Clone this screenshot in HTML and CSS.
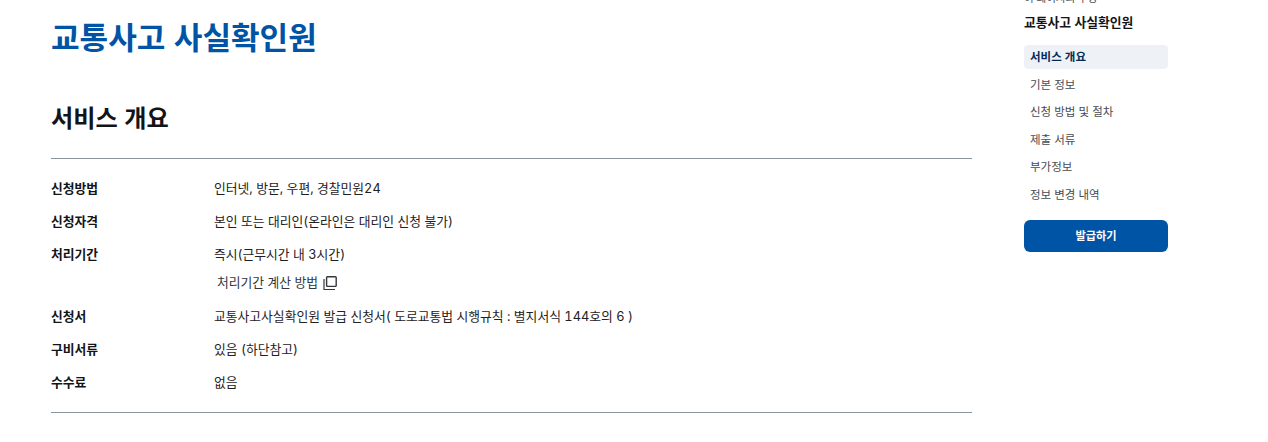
FILE: index.html
```html
<!DOCTYPE html>
<html lang="ko">
<head>
<meta charset="utf-8">
<title>교통사고 사실확인원</title>
<link rel="stylesheet" href="styles.css">
</head>
<body>
<div class="page">
  <main class="main">
    <h1 class="title">교통사고 사실확인원</h1>
    <h2 class="section-title">서비스 개요</h2>
    <dl class="info">
      <div class="row"><dt>신청방법</dt><dd>인터넷, 방문, 우편, 경찰민원24</dd></div>
      <div class="row"><dt>신청자격</dt><dd>본인 또는 대리인(온라인은 대리인 신청 불가)</dd></div>
      <div class="row"><dt>처리기간</dt><dd>즉시(근무시간 내 3시간)
        <a class="calc" href="#">처리기간 계산 방법
          <svg class="copy" width="14" height="14" viewBox="0 0 14 14" aria-hidden="true"><path d="M1 3v10.5h11" fill="none" stroke="#33363d" stroke-width="1.2"/><rect x="3.6" y="0.8" width="9.6" height="9.6" rx="0.8" fill="none" stroke="#33363d" stroke-width="1.4"/></svg>
        </a></dd></div>
      <div class="row"><dt>신청서</dt><dd>교통사고사실확인원 발급 신청서( 도로교통법 시행규칙 : 별지서식 144호의 6 )</dd></div>
      <div class="row"><dt>구비서류</dt><dd>있음 (하단참고)</dd></div>
      <div class="row"><dt>수수료</dt><dd>없음</dd></div>
    </dl>
  </main>
  <aside class="side">
    <p class="side-label">이 페이지의 구성</p>
    <p class="side-title">교통사고 사실확인원</p>
    <nav class="toc">
      <a class="toc-item active" href="#">서비스 개요</a>
      <a class="toc-item" href="#">기본 정보</a>
      <a class="toc-item" href="#">신청 방법 및 절차</a>
      <a class="toc-item" href="#">제출 서류</a>
      <a class="toc-item" href="#">부가정보</a>
      <a class="toc-item" href="#">정보 변경 내역</a>
    </nav>
    <a class="issue" href="#">발급하기</a>
  </aside>
</div>
</body>
</html>
```
FILE: styles.css
```css
* { box-sizing: border-box; }
html, body { margin: 0; padding: 0; background: #fff; overflow: hidden; }
body { font-family: Inter, "Noto Sans CJK KR", "Noto Sans", sans-serif; font-variant-numeric: tabular-nums; color: #1e2124; height: 442px; }
.page { display: flex; align-items: flex-start; padding-left: 51px; }
.main { width: 921px; flex: none; }
.title { margin: 16px 0 0; font-size: 31.1px; line-height: 44px; font-weight: 700; color: #0054a6; }
.section-title { margin: 41px 0 0; font-size: 24.2px; line-height: 36px; font-weight: 700; color: #131416; }
.info { margin: 21px 0 0; padding: 10px 0 16px; border-top: 1px solid #8a949e; border-bottom: 1px solid #8a949e; }
.row { display: flex; padding: 6px 0 0; font-size: 12.8px; line-height: 27px; }
.row dt { width: 163px; flex: none; font-weight: 700; color: #131416; }
.row dd { margin: 0; color: #1e2124; }
.calc { display: flex; align-items: center; gap: 5px; margin-left: 3px; color: #33363d; text-decoration: none; line-height: 29px; }
.copy { flex: none; }
.side { width: 144px; flex: none; margin-left: 52px; margin-top: -10px; }
.side-label { margin: 0; font-size: 10.5px; line-height: 18px; color: #464c53; }
.side-title { margin: 5px 0 0; font-size: 12.8px; line-height: 20px; font-weight: 700; color: #131416; }
.toc { display: flex; flex-direction: column; gap: 3.5px; margin-top: 12px; }
.toc-item { display: block; height: 24px; padding: 0 6px; border-radius: 4px; font-size: 11.5px; line-height: 24px; color: #464c53; text-decoration: none; }
.toc-item.active { background: #eef2f7; color: #052b57; font-weight: 700; }
.issue { display: block; height: 32px; margin-top: 13px; border-radius: 6px; background: #0054a6; color: #fff; font-size: 11.2px; line-height: 32px; font-weight: 700; text-align: center; text-decoration: none; }
```
